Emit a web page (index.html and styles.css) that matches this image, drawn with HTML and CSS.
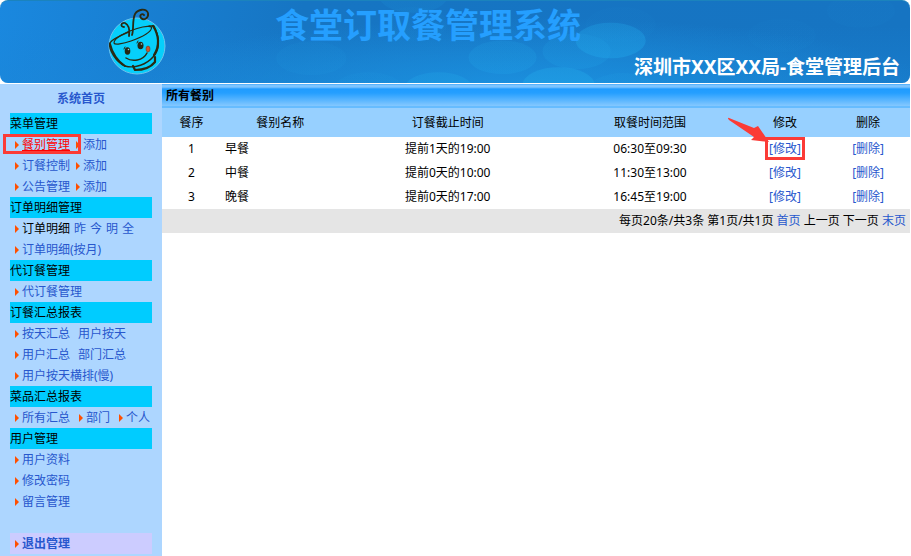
FILE: index.html
```html
<!DOCTYPE html>
<html lang="zh-CN">
<head>
<meta charset="utf-8">
<title>食堂订取餐管理系统</title>
<link rel="stylesheet" href="styles.css">
</head>
<body>
<header class="banner">
  <svg class="banner-art" viewBox="0 0 909 83" preserveAspectRatio="none" aria-hidden="true">
    <defs>
      <linearGradient id="bubble" x1="0" y1="0" x2="0" y2="1">
        <stop offset="0" stop-color="#20a0e4" stop-opacity=".5"/>
        <stop offset="1" stop-color="#20a4e8" stop-opacity=".65"/>
      </linearGradient>
    </defs>
    <g fill="url(#bubble)">
      <ellipse cx="311" cy="58" rx="35" ry="17" opacity=".15"/>
      <ellipse cx="413" cy="-5" rx="34" ry="17" opacity=".2"/>
      <ellipse cx="413" cy="23" rx="34" ry="17" opacity=".08"/>
      <ellipse cx="368" cy="89" rx="34" ry="17" opacity=".2"/>
      <ellipse cx="438" cy="89" rx="34" ry="17" opacity=".7"/>
      <ellipse cx="502" cy="57" rx="34" ry="17" opacity=".4"/>
      <ellipse cx="576" cy="51" rx="34" ry="18" opacity=".35"/>
      <ellipse cx="558" cy="85" rx="36" ry="18"/>
      <ellipse cx="610" cy="40" rx="35" ry="18" opacity=".7"/>
      <ellipse cx="622" cy="90" rx="34" ry="17" opacity=".3"/>
      <ellipse cx="620" cy="24" rx="35" ry="18" opacity=".06"/>
      <ellipse cx="781" cy="35" rx="34" ry="17" opacity=".06"/>
      <ellipse cx="860" cy="10" rx="34" ry="17" opacity=".06"/>
    </g>
  </svg>
  <svg class="logo" viewBox="0 0 75 80" role="img" aria-label="食堂">
    <circle cx="37" cy="45" r="28" fill="#06cffb" stroke="#6cc3ec"/>
    <g fill="none" stroke="#2a2a12" stroke-width="1.6" stroke-linecap="round" stroke-linejoin="round">
      <path d="M14 42C14 37 25 31 37 27.500C45 25 52 24.500 51.500 27C51 31 42 36 31 40C23 43 14.500 44 14 42Z" stroke-width="1.2"/>
      <path d="M29 31C22 34 12 38 9.800 42C8.500 49 16 61 25 65C35 68 47 63 53 56C60 49 60 37 54 25L49 25" stroke-width="1.400"/>
      <path d="M53 25C59 34 60 45 54 54" stroke-width="2.200"/>
      <path d="M10 43C12 52 18 61 25 65" stroke-width="2"/>
      <path d="M33 65L35 69C43 69 51 66 55 61L55 56" stroke-width="2.200"/>
      <path d="M26 57C32 61 43 60 47 52" stroke-width="1.500"/>
      <path d="M29 35C30 29 29 24 25 22C21 21 20 26 24 26" stroke-width="1.800"/>
      <path d="M32 34C34 29 32 19 35 13C38 8 46 7 48 12C49 17 44 20 41 17C39 14 42 12 44 14" stroke-width="1.800"/>
      <path d="M24 48L25 46M37 42L38 40" stroke-width="1"/>
    </g>
    <ellipse cx="27.500" cy="50" rx="2.800" ry="3.800" fill="#252714"/>
    <ellipse cx="40.500" cy="44.500" rx="3" ry="3.800" fill="#252714"/>
    <circle cx="28.500" cy="48.500" r=".8" fill="#91d8df"/>
    <circle cx="41.500" cy="43" r=".8" fill="#91d8df"/>
    <ellipse cx="48" cy="48" rx="2" ry="3" fill="#cf542d" stroke="#6e3c20" stroke-width=".6"/>
  </svg>
  <h1 class="system-name">食堂订取餐管理系统</h1>
  <p class="site-name">深圳市XX区XX局-食堂管理后台</p>
</header>
<div class="layout">
  <nav class="sidebar">
    <a class="home" href="#">系统首页</a>
    <h2>菜单管理</h2>
    <ul>
      <li class="marked"><a class="arrow current" href="#">餐别管理</a><a class="arrow" href="#">添加</a></li>
      <li><a class="arrow" href="#">订餐控制</a><a class="arrow" href="#">添加</a></li>
      <li><a class="arrow" href="#">公告管理</a><a class="arrow" href="#">添加</a></li>
    </ul>
    <h2>订单明细管理</h2>
    <ul>
      <li class="tight"><span class="arrow">订单明细</span><a href="#">昨</a><a href="#">今</a><a href="#">明</a><a href="#">全</a></li>
      <li><a class="arrow" href="#">订单明细(按月)</a></li>
    </ul>
    <h2>代订餐管理</h2>
    <ul>
      <li><a class="arrow" href="#">代订餐管理</a></li>
    </ul>
    <h2>订餐汇总报表</h2>
    <ul>
      <li class="wide"><a class="arrow" href="#">按天汇总</a><a href="#">用户按天</a></li>
      <li class="wide"><a class="arrow" href="#">用户汇总</a><a href="#">部门汇总</a></li>
      <li><a class="arrow" href="#">用户按天横排(慢)</a></li>
    </ul>
    <h2>菜品汇总报表</h2>
    <ul>
      <li class="wider"><a class="arrow" href="#">所有汇总</a><a class="arrow" href="#">部门</a><a class="arrow" href="#">个人</a></li>
    </ul>
    <h2>用户管理</h2>
    <ul>
      <li><a class="arrow" href="#">用户资料</a></li>
      <li><a class="arrow" href="#">修改密码</a></li>
      <li><a class="arrow" href="#">留言管理</a></li>
    </ul>
    <div class="logout"><a class="arrow" href="#">退出管理</a></div>
  </nav>
  <main class="content">
    <h2 class="panel-title">所有餐别</h2>
    <table>
      <colgroup><col class="c-order"><col class="c-name"><col class="c-deadline"><col class="c-period"><col class="c-edit"><col class="c-delete"></colgroup>
      <thead>
        <tr><th>餐序</th><th>餐别名称</th><th>订餐截止时间</th><th>取餐时间范围</th><th>修改</th><th>删除</th></tr>
      </thead>
      <tbody>
        <tr><td>1</td><td class="name">早餐</td><td>提前1天的19:00</td><td>06:30至09:30</td><td><span class="callout"><a href="#">[修改]</a><svg class="pointer" viewBox="0 0 42 26" aria-hidden="true"><path d="M1 1.500Q1 .5 2 1L27 11L31 9L42 25L24 23L27 20L2 3Z" fill="#fb3b36"/></svg></span></td><td><a href="#">[删除]</a></td></tr>
        <tr><td>2</td><td class="name">中餐</td><td>提前0天的10:00</td><td>11:30至13:00</td><td><a href="#">[修改]</a></td><td><a href="#">[删除]</a></td></tr>
        <tr><td>3</td><td class="name">晚餐</td><td>提前0天的17:00</td><td>16:45至19:00</td><td><a href="#">[修改]</a></td><td><a href="#">[删除]</a></td></tr>
      </tbody>
    </table>
    <div class="pager">每页20条/共3条 第1页/共1页 <a href="#">首页</a> 上一页 下一页 <a href="#">末页</a></div>
  </main>
</div>
</body>
</html>
```

FILE: styles.css
```css
*, *::before, *::after { box-sizing: border-box; }

body {
  display: flex;
  flex-direction: column;
  min-height: 100vh;
  margin: 0;
  padding-right: 1px;
  background: #fff;
  color: #000;
  font: 12px/21px "Noto Sans", "Noto Sans CJK SC", sans-serif;
}

h1, h2, p, ul { margin: 0; padding: 0; }
h2 { font-size: 12px; font-weight: 400; }
ul { list-style: none; }
a { color: #2757cd; text-decoration: none; }

.banner {
  position: relative;
  display: flex;
  justify-content: space-between;
  min-height: 83px;
  margin-bottom: 1px;
  padding-left: 100px;
  padding-right: 10px;
  overflow: hidden;
  border-top: 1px solid #1b83bd;
  border-radius: 8px;
  background:
    radial-gradient(ellipse 45% 90% at 58% 110%, rgba(28, 150, 228, .8), rgba(28, 150, 228, 0)),
    linear-gradient(rgba(27, 135, 216, 0) 30%, rgba(27, 135, 216, .4)),
    linear-gradient(100deg, #1a88df 0%, #1675c3 33%, #1674c2 100%);
}

.banner-art {
  position: absolute;
  inset: 0;
  width: 100%;
  height: 100%;
}

.logo {
  position: relative;
  flex: none;
  width: 75px;
  height: 80px;
}

.system-name {
  position: relative;
  flex: 1;
  padding-left: 100px;
  color: #259fff;
  font-size: 34px;
  line-height: 48px;
  white-space: nowrap;
}

.site-name {
  position: relative;
  align-self: flex-end;
  padding-bottom: 4px;
  color: #fff;
  font-size: 19px;
  font-weight: 700;
  line-height: 24px;
  white-space: nowrap;
}

.layout {
  display: flex;
  flex: 1;
}

.sidebar {
  flex: none;
  width: 162px;
  padding: 4px 10px 2px;
  background: #add6ff;
}

.home {
  display: block;
  margin-bottom: 4px;
  font-weight: 600;
  text-align: center;
}

.sidebar h2 { background: #0cf; }

.sidebar li, .logout {
  display: flex;
  gap: 6px;
  padding-left: 5px;
  white-space: nowrap;
}

.sidebar .tight { gap: 4px; }
.sidebar .wide { gap: 8px; }
.sidebar .wider { gap: 9px; }

.arrow {
  display: flex;
  align-items: center;
  gap: 3px;
}

.arrow::before {
  content: "";
  border-left: 4px solid #ff4f00;
  border-top: 4px solid transparent;
  border-bottom: 4px solid transparent;
}

.current {
  color: #f00;
  text-decoration: underline;
}

.marked { position: relative; }

.marked::after {
  content: "";
  position: absolute;
  top: 0;
  left: -7px;
  width: 78px;
  height: 20px;
  border: 3px solid #fb3b36;
}

.logout {
  margin-top: 21px;
  background: #ccf;
  font-weight: 600;
}

.content {
  flex: 1;
  min-width: 0;
}

.panel-title {
  padding-left: 4px;
  border-top: 1px solid #58b3fd;
  border-bottom: 2px solid #66bcff;
  background: linear-gradient(#7cc4ff 0, #7cc4ff 2px, #209cff 4px, #259fff 8px, #84c8ff 100%);
  font-weight: 600;
}

table {
  width: 100%;
  table-layout: fixed;
  border-collapse: collapse;
  line-height: 24px;
  text-align: center;
}

th, td { padding: 0; }

th {
  height: 29px;
  background: #97d0ff;
  font-weight: 400;
}

.c-order { width: 7.9%; }
.c-name { width: 15.8%; }
.c-deadline { width: 29%; }
.c-period { width: 25.1%; }
.c-edit { width: 11%; }
.c-delete { width: 11.2%; }

.name {
  padding-left: 4px;
  text-align: left;
}

.callout {
  position: relative;
  display: inline-block;
}

.callout::after {
  content: "";
  position: absolute;
  inset: 0 -4px 1px;
  border: 3px solid #fb3b36;
}

.pointer {
  position: absolute;
  right: 100%;
  bottom: 100%;
  width: 42px;
  height: 26px;
  margin-bottom: -6px;
}

.pager {
  padding-right: 4px;
  background: #e5e5e5;
  line-height: 24px;
  text-align: right;
}
```
